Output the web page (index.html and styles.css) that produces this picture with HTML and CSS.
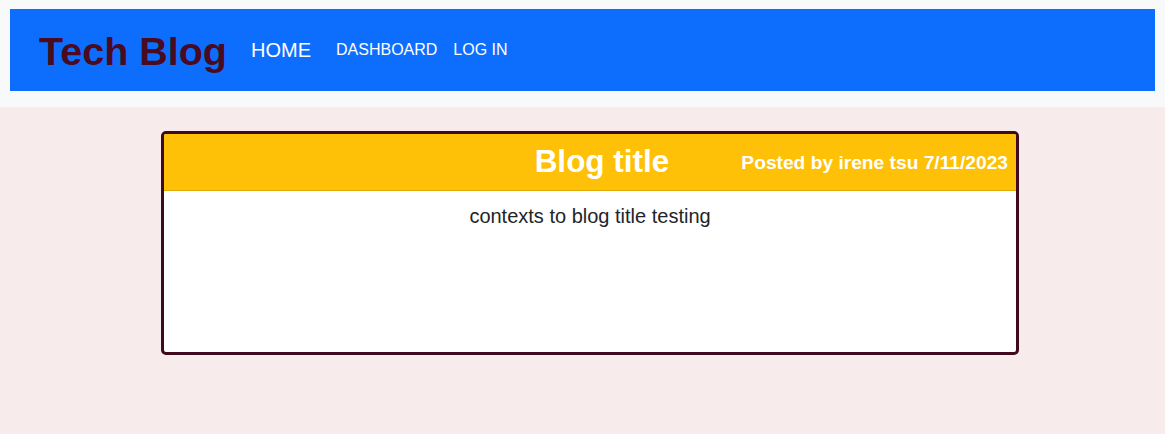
FILE: index.html
```html
<!DOCTYPE html>
<html lang="en">
<head>
<meta charset="utf-8">
<title>Tech Blog</title>
<link rel="stylesheet" href="styles.css">
</head>
<body>
<header class="top">
  <nav class="navbar">
    <span class="brand">Tech Blog</span>
    <a class="nav-home" href="#">HOME</a>
    <a class="nav-link" href="#">DASHBOARD</a>
    <a class="nav-link" href="#">LOG IN</a>
  </nav>
</header>
<main class="main">
  <article class="card">
    <div class="card-header">
      <h2 class="card-title">Blog title</h2>
      <span class="posted">Posted by irene tsu 7/11/2023</span>
    </div>
    <div class="card-body">
      <p class="card-text">contexts to blog title testing</p>
    </div>
  </article>
</main>
</body>
</html>
```

FILE: styles.css
```css
* { box-sizing: border-box; }
html, body { margin: 0; padding: 0; }
body {
  font-family: "Liberation Sans", Arial, sans-serif;
  background: #f7eceb;
  min-height: 434px;
  color: #212529;
}
.top {
  background: #f8f9fa;
  padding: 9px 10px 16px;
}
.navbar {
  background: #0d6efd;
  height: 82px;
  display: flex;
  align-items: center;
  padding-left: 29px;
}
.brand {
  font-weight: bold;
  font-size: 39.5px;
  color: #4a0a22;
  margin-right: 24px;
  position: relative;
  top: 1px;
}
.nav-home, .nav-link {
  color: #fff;
  text-decoration: none;
}
.nav-home {
  font-size: 20px;
  margin-right: 25px;
}
.nav-link {
  font-size: 16px;
  margin-right: 16px;
}
.main {
  display: flex;
  justify-content: center;
  padding: 24px 0 0 15px;
}
.card {
  width: 858px;
  border: 3px solid #3f0a1e;
  border-radius: 5px;
  overflow: hidden;
  background: #fff;
}
.card-header {
  background: #ffc107;
  border-bottom: 1px solid #dfa906;
  height: 57px;
  display: grid;
  grid-template-columns: 1fr auto 1fr;
  align-items: center;
  padding: 0 8px;
}
.card-title {
  grid-column: 2;
  margin: 0 0 0 24px;
  font-size: 31.5px;
  font-weight: bold;
  color: #fff;
  line-height: 1.2;
}
.posted {
  grid-column: 3;
  justify-self: end;
  font-weight: bold;
  font-size: 19.2px;
  color: #fff;
  position: relative;
  top: 1px;
}
.card-body {
  height: 161px;
  padding: 10px 16px 0;
}
.card-text {
  margin: 0;
  text-align: center;
  font-size: 20px;
  line-height: 30px;
}
```
